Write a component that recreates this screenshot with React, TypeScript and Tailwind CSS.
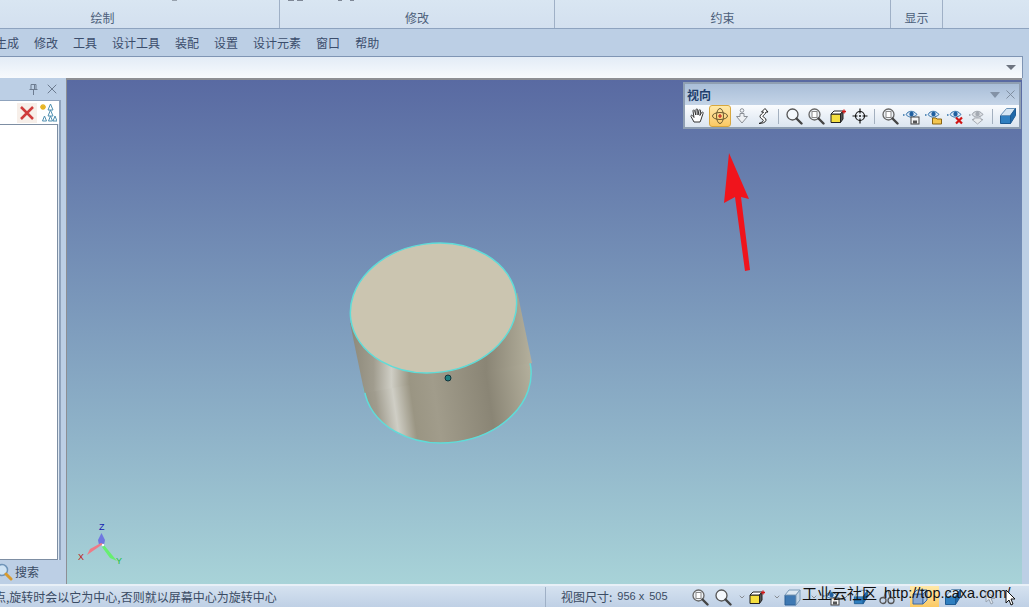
import type { ReactNode } from "react"
import { X, ChevronDown } from "lucide-react"

const CJK = "font-['Noto_Sans_CJK_SC','Liberation_Sans',sans-serif]"

const MENU_ITEMS = ["生成", "修改", "工具", "设计工具", "装配", "设置", "设计元素", "窗口", "帮助"]

const RIBBON_GROUPS = [
  { label: "绘制", width: "w-[280px]", pad: "pr-[74px]" },
  { label: "修改", width: "w-[275px]", pad: "" },
  { label: "约束", width: "w-[336px]", pad: "" },
  { label: "显示", width: "w-[52px]", pad: "" },
]

function Ico({ children, size = 18 }: { children: ReactNode; size?: number }) {
  return (
    <svg width={size} height={size} viewBox="0 0 18 18" fill="none">
      {children}
    </svg>
  )
}

const HandIcon = () => (
  <Ico>
    <path d="M5 15 2 9.500c-.6-1 .8-1.800 1.500-.9L5 10.500 4 4c-.2-1.200 1.500-1.400 1.700-.2L6.800 8 7 2.800c0-1.200 1.700-1.200 1.700 0L9 8l1-4.600c.3-1.100 1.800-.8 1.600.4L10.900 8.500l1.700-3c.6-1 2-.3 1.500.8L12.500 11c-.4 1.500-.8 2.500-1.500 4Z" fill="#fff" stroke="#333" strokeWidth="1" />
  </Ico>
)

const OrbitIcon = () => (
  <Ico>
    <ellipse cx="9" cy="9" rx="7.500" ry="3.500" stroke="#6b5a30" strokeWidth="1" />
    <ellipse cx="9" cy="9" rx="3.500" ry="7.500" stroke="#6b5a30" strokeWidth="1" />
    <path d="M7 9h4M9 7v4" stroke="#c02020" strokeWidth="1.200" />
  </Ico>
)

const DownIcon = () => (
  <Ico>
    <circle cx="9" cy="3.500" r="1.800" stroke="#8a8f96" />
    <path d="M7 6.500h4v3h3.500L9 16 3.500 9.500H7Z" fill="#eef1f4" stroke="#8a8f96" />
  </Ico>
)

const SnakeIcon = () => (
  <Ico>
    <path d="M10 1.500 13 5h-2c-.6 2.500-3 3-3 4.500 0 1 3.500 1.500 3 3.800-.4 2-3.500 3.200-7 3.200 2-1 4.300-1.700 4.300-3 0-1.500-3.300-1.800-3.300-4 0-2 3-3 3.500-4.500H6.500Z" fill="#fff" stroke="#222" strokeWidth="1" />
  </Ico>
)

const ZoomIcon = () => (
  <Ico>
    <circle cx="7.500" cy="7.500" r="5.500" fill="#f4f8fc" stroke="#555" strokeWidth="1.300" />
    <path d="m11.500 11.500 5 5" stroke="#444" strokeWidth="2.400" strokeLinecap="round" />
  </Ico>
)

const ZoomWindowIcon = () => (
  <Ico>
    <circle cx="7.500" cy="7.500" r="5.500" fill="#eef2f6" stroke="#666" strokeWidth="1.300" />
    <rect x="5" y="4.500" width="5" height="6" fill="#fff" stroke="#888" />
    <path d="m11.500 11.500 5 5" stroke="#444" strokeWidth="2.400" strokeLinecap="round" />
  </Ico>
)

const BoxIcon = () => (
  <Ico>
    <path d="M2 7h9.500v8.500H2Z" fill="#f5df3f" stroke="#222" />
    <path d="m2 7 3-3h9l-2.500 3Z" fill="#fff" stroke="#222" />
    <path d="M11.500 7 14 4v8l-2.500 3.500Z" fill="#555" stroke="#222" />
    <path d="M13 4.500h4M15 2.500v4" stroke="#d01818" strokeWidth="1.300" />
  </Ico>
)

const TargetIcon = () => (
  <Ico>
    <circle cx="9" cy="9" r="4.500" stroke="#111" strokeWidth="1.200" />
    <path d="M9 1.500v5M9 11.500v5M1.500 9h5M11.500 9h5" stroke="#111" strokeWidth="1.200" />
    <circle cx="9" cy="9" r="1" fill="#111" />
  </Ico>
)

const EyeBase = ({ faded = false }: { faded?: boolean }) => (
  <>
    <path d="M3 7.500C5 4 10 2.500 14 7.500 10 11 6 11 3 7.500Z" fill={faded ? "#d9dde2" : "#dbe8f6"} stroke={faded ? "#9aa0a8" : "#2f6fa8"} />
    <circle cx="8.500" cy="7" r="2.200" fill={faded ? "#a5abb3" : "#1f5f9f"} />
    <path d="M0 8h1.500" stroke={faded ? "#9aa0a8" : "#2f6fa8"} strokeWidth="1.500" />
  </>
)

const ViewSaveIcon = () => (
  <Ico>
    <EyeBase />
    <rect x="8" y="10" width="8" height="7" fill="#f4f4f4" stroke="#444" />
    <rect x="10" y="13.500" width="4" height="3" fill="#555" />
  </Ico>
)

const ViewOpenIcon = () => (
  <Ico>
    <EyeBase />
    <path d="M7.500 11H11l1 1h4.500v5h-9Z" fill="#f3c650" stroke="#8a6414" />
  </Ico>
)

const ViewDeleteIcon = () => (
  <Ico>
    <EyeBase />
    <path d="m9 10.500 6 6M15 10.500l-6 6" stroke="#d01414" strokeWidth="2.200" />
  </Ico>
)

const ViewFadedIcon = () => (
  <Ico>
    <EyeBase faded />
    <path d="M5 11h7v1.500h2L8.500 17 3 12.500h2Z" fill="#e8ebee" stroke="#a8adb4" />
  </Ico>
)

const SolidIcon = ({ size = 18 }: { size?: number }) => (
  <Ico size={size}>
    <path d="M1.500 8.500h10v8h-10Z" fill="#2f7fc0" stroke="#1d5b94" />
    <path d="m1.500 8.500 6-7h9l-5 7Z" fill="#d5e6f4" stroke="#6a93b8" />
    <path d="m11.500 8.500 5-7v7l-5 8Z" fill="#1f69aa" stroke="#1d5b94" />
  </Ico>
)

const ShadedCubeIcon = () => (
  <Ico>
    <path d="M1 7h11v10H1Z" fill="#3f79b3" stroke="#2b5f94" />
    <path d="m1 7 4-5h11l-4 5Z" fill="#dde8f2" stroke="#7d9cb8" />
    <path d="m12 7 4-5v10l-4 5Z" fill="#c3d5e6" stroke="#7d9cb8" />
  </Ico>
)

const PaleCubeIcon = () => (
  <Ico>
    <path d="M2 6h10v10H2Z" fill="#8aa9d4" stroke="#3f6ba3" />
    <path d="m2 6 4-4h10l-4 4Z" fill="#c5d5ea" stroke="#3f6ba3" />
    <path d="m12 6 4-4v10l-4 4Z" fill="#a9c0df" stroke="#3f6ba3" />
  </Ico>
)

const ScissorIcon = () => (
  <Ico>
    <circle cx="5" cy="12.500" r="3" stroke="#555" strokeWidth="1.300" />
    <circle cx="13" cy="12.500" r="3" stroke="#555" strokeWidth="1.300" />
    <path d="M6 9.500 8 2M12 9.500 10 2" stroke="#777" strokeWidth="1.200" />
  </Ico>
)

const FadedPointerIcon = () => (
  <Ico>
    <path d="M5 3v11l3-2.500 2 4.500 2-1-2-4.500h4Z" fill="#dfe6ee" stroke="#98a3b0" />
  </Ico>
)

const TOOL_GROUPS = [
  [HandIcon, OrbitIcon, DownIcon, SnakeIcon],
  [ZoomIcon, ZoomWindowIcon, BoxIcon, TargetIcon],
  [ZoomWindowIcon, ViewSaveIcon, ViewOpenIcon, ViewDeleteIcon, ViewFadedIcon],
  [SolidIcon],
]

function ViewToolbar() {
  return (
    <div className="absolute left-[616px] top-[2px] w-[338px] h-[47px] border-2 border-[#8f9fb2] bg-[#bccde2]">
      <div className="h-[21px] flex items-center justify-between pl-[2px] pr-[1px] bg-gradient-to-b from-[#a9bed8] to-[#c4d4e7]">
        <span className={`${CJK} text-[12px] font-bold text-[#1f3f6c]`}>视向</span>
        <div className="flex items-center gap-[3px]">
          <svg width="10" height="6" viewBox="0 0 10 6"><path d="M0 0h10L5 6Z" fill="#8392a6" /></svg>
          <X size={15} strokeWidth={1.500} className="text-[#7d8b9d]" />
        </div>
      </div>
      <div className="h-[22px] flex items-center pl-[2px] bg-gradient-to-b from-[#fafcfe] to-[#dbe5f0]">
        {TOOL_GROUPS.map((group, i) => (
          <div key={i} className="flex items-center">
            {group.map((Icon, j) => (
              <div
                key={j}
                className={`w-[22px] h-[22px] flex items-center justify-center ${
                  i === 0 && j === 1 ? "rounded-[3px] border border-[#d8a73e] bg-gradient-to-b from-[#ffe9a8] to-[#fbc963]" : ""
                }`}
              >
                <Icon />
              </div>
            ))}
            {i < TOOL_GROUPS.length - 1 && <div className="w-px h-[15px] bg-[#a3b0bf] ml-[3px] mr-[4px]" />}
          </div>
        ))}
      </div>
    </div>
  )
}

// drawing coordinates are those of the screenshot
function Cylinder() {
  return (
    <svg className="absolute left-[279px] top-[160px]" width="190" height="210" viewBox="346 240 190 210">
      <defs>
        <linearGradient id="side" gradientUnits="userSpaceOnUse" x1="352" y1="0" x2="531" y2="0">
          <stop offset="0" stopColor="#8e8a7b" />
          <stop offset="0.12" stopColor="#a09c8e" />
          <stop offset="0.22" stopColor="#cfcec5" />
          <stop offset="0.32" stopColor="#9a9583" />
          <stop offset="0.45" stopColor="#a19c8b" />
          <stop offset="0.75" stopColor="#8a8575" />
          <stop offset="1" stopColor="#b3af9c" />
        </linearGradient>
      </defs>
      <ellipse cx="447.500" cy="378" rx="84" ry="64.500" transform="rotate(-8 447.500 378)" fill="url(#side)" stroke="#5fdcd8" strokeWidth="1.500" />
      <path d="M350 323 L364.500 393 L532 363 L517.500 293 Z" fill="url(#side)" />
      <ellipse cx="433.500" cy="308" rx="83.500" ry="64.500" transform="rotate(-8 433.500 308)" fill="#cbc5b0" stroke="#5fdcd8" strokeWidth="1.500" />
      <circle cx="448" cy="378" r="3" fill="#1f7f80" stroke="#12333a" />
    </svg>
  )
}

function Triad() {
  return (
    <svg className="absolute left-[10px] top-[441px]" width="52" height="52" viewBox="0 0 52 52">
      <path d="M24.500 12 28 19l-1 5h-5l-1-5Z" fill="#6f77e0" />
      <path d="M26 23 10 34l3-6 11-6Z" fill="#ef7a86" />
      <path d="M27 24 40 40l-7-3-8-11Z" fill="#66ef70" />
      <circle cx="26" cy="24" r="1.200" fill="#fff" />
      <text x="22" y="9" fontSize="9" fill="#1420b0" fontFamily="Liberation Sans">Z</text>
      <text x="1" y="39" fontSize="9" fill="#c01818" fontFamily="Liberation Sans">X</text>
      <text x="39" y="43" fontSize="9" fill="#22c040" fontFamily="Liberation Sans">Y</text>
    </svg>
  )
}

function TreeIcon() {
  return (
    <svg width="18" height="20" viewBox="0 0 18 20" fill="none">
      <path d="M4 1v6M1 4h6M2 2l4 4M6 2 2 6" stroke="#e6b422" strokeWidth="1.300" />
      <path d="M11.500 1 9 7h5ZM11.500 7 9 13h5Z" stroke="#4f8fb0" strokeWidth="1" />
      <path d="M5.500 13 3.500 18h4ZM11.500 13l-2 5h4ZM16 13l-2 5h4Z" stroke="#4f8fb0" strokeWidth="1" />
    </svg>
  )
}

function SidePanel() {
  return (
    <div className="w-[66px] shrink-0 flex flex-col bg-[#bccfe5]">
      <div className="h-[22px] flex items-center justify-end gap-[6px] pr-[9px] text-[#6d7c90]">
        <svg width="9" height="11" viewBox="0 0 9 11" fill="none">
          <path d="M2 .5h5v5H2ZM.5 5.500h8M4.500 6v5M5.500 1v4" stroke="#6d7c90" />
        </svg>
        <X size={16} strokeWidth={1.500} className="-mr-[3px]" />
      </div>
      <div className="flex-1 w-[61px] border-t border-r-2 border-[#8fa3bd] flex flex-col bg-[#dfe9f4]">
        <div className="h-[23px] bg-white flex items-center justify-end pr-[2px]">
          <div className="w-[20px] h-[20px] mr-[2px] flex items-center justify-center bg-[#f7efe9]">
            <svg width="16" height="16" viewBox="0 0 16 16"><path d="m2 2 12 12M14 2 2 14" stroke="#cf3b3b" strokeWidth="2.500" /></svg>
          </div>
          <TreeIcon />
        </div>
        <div className="flex-1 w-[58px] bg-white border-t border-r border-b border-[#7d8ea3]" />
      </div>
      <div className="h-[24px] flex items-center pl-[15px] relative">
        <svg className="absolute -left-[5px] top-[3px]" width="18" height="18" viewBox="0 0 18 18" fill="none">
          <circle cx="7" cy="7" r="5.500" fill="#cfe3f4" stroke="#6f94b8" strokeWidth="1.500" />
          <path d="m11 11 5 5" stroke="#d79a2f" strokeWidth="3" strokeLinecap="round" />
        </svg>
        <span className={`${CJK} text-[12px] text-[#3a4b63]`}>搜索</span>
      </div>
    </div>
  )
}

export default function App() {
  return (
    <div className={`${CJK} relative w-[1029px] h-[607px] overflow-hidden flex flex-col bg-[#bccfe5]`}>
      {/* ribbon, only the group captions are in view */}
      <div className="relative h-[29px] shrink-0 flex border-b border-[#8ea3bf] bg-gradient-to-b from-[#d9e6f2] to-[#d3e0ef]">
        {RIBBON_GROUPS.map((g) => (
          <div key={g.label} className={`${g.width} ${g.pad} h-full pt-[9px] flex justify-center border-r border-[#9fb0c6] text-[12px] leading-[18px] text-[#4c5f7a]`}>
            {g.label}
          </div>
        ))}
        {/* bottoms of the ribbon icons that are cut off by the top edge */}
        <div className="absolute left-[172px] top-0 w-[5px] h-px bg-[#98a2ae]" />
        <div className="absolute left-[288px] top-0 w-[6px] h-px bg-[#7f8896]" />
        <div className="absolute left-[297px] top-0 w-[6px] h-px bg-[#7f8896]" />
        <div className="absolute left-[338px] top-0 w-[4px] h-px bg-[#7f8896]" />
        <div className="absolute left-[350px] top-0 w-[4px] h-px bg-[#7f8896]" />
      </div>

      <div className="h-[27px] shrink-0 flex items-center gap-[15px] -ml-[5px] text-[12px] text-[#3b4d6c] bg-[#bccfe5]">
        {MENU_ITEMS.map((m) => (
          <span key={m}>{m}</span>
        ))}
      </div>

      <div className="h-[22px] shrink-0 mr-[6px] border-t border-r border-[#7f95b4] bg-gradient-to-b from-[#e3ecf6] to-[#f7fafd] flex items-center justify-end pr-[6px]">
        <svg width="10" height="5" viewBox="0 0 10 5"><path d="M0 0h10L5 5Z" fill="#6d7480" /></svg>
      </div>

      <div className="flex-1 min-h-0 flex">
        <SidePanel />
        <div className="relative w-[956px] shrink-0 border-t-2 border-l border-[#8d8f94] bg-gradient-to-b from-[#596aa2] to-[#a8d3d8]">
          <ViewToolbar />
          <svg className="absolute left-[650px] top-[70px]" width="40" height="125" viewBox="0 0 40 125">
            <path d="M12 3 32 49l-8-2 9 73-5 1-10-74-11 6Z" fill="#f0141c" />
          </svg>
          <Cylinder />
          <Triad />
        </div>
      </div>

      <div className="relative h-[23px] shrink-0 flex items-center border-t-2 border-[#e8f0f7] bg-gradient-to-b from-[#d5e2f0] to-[#bfd0e5] text-[12px] text-[#3a4b63]">
        <div className="w-[551px] -ml-[6px] shrink-0 whitespace-nowrap">点,旋转时会以它为中心,否则就以屏幕中心为旋转中心</div>
        <div className="w-px h-[20px] bg-[#9fb0c6]" />
        <div className="ml-[15px] w-[130px] shrink-0 flex items-center">
          <span>视图尺寸:</span>
          <span className="ml-[5px] text-[11px] font-['Liberation_Sans',sans-serif]">956</span>
          <span className="ml-[3px] text-[11px] font-['Liberation_Sans',sans-serif]">x</span>
          <span className="ml-[5px] text-[11px] font-['Liberation_Sans',sans-serif]">505</span>
        </div>
        <div className="flex items-center">
          <ZoomWindowIcon />
          <div className="ml-[5px]"><ZoomIcon /></div>
          <ChevronDown size={8} className="ml-[6px] text-[#666]" />
          <div className="ml-[2px]"><BoxIcon /></div>
          <ChevronDown size={8} className="ml-[7px] text-[#666]" />
          <div className="ml-[3px]"><ShadedCubeIcon /></div>
          <ChevronDown size={8} className="ml-[8px] text-[#666]" />
          <div className="ml-[5px]"><ViewSaveIcon /></div>
          <ChevronDown size={8} className="text-[#666]" />
          <div className="ml-[4px]"><SolidIcon size={16} /></div>
          <div className="ml-[9px]"><ScissorIcon /></div>
          <div className="ml-[14px] w-[29px] h-[21px] pl-[1px] flex items-center bg-gradient-to-b from-[#ffe9a8] to-[#fbc963]"><PaleCubeIcon /></div>
          <div className="ml-[5px]"><SolidIcon /></div>
          <div className="ml-[19px]"><FadedPointerIcon /></div>
        </div>
        {/* watermark stamped over the picture */}
        <div className="absolute left-[802px] top-[-3px] flex items-center gap-[7px] text-[#111] leading-[20px]">
          <span className="text-[15px]">工业云社区</span>
          <span className="text-[14.5px] font-['Liberation_Sans',sans-serif]">http://top.caxa.com/</span>
        </div>
        <svg className="absolute left-[1005px] top-[3px]" width="12" height="18" viewBox="0 0 12 18">
          <path d="M1 1v13l3-3 2 5 2-1-2-5h4Z" fill="#fff" stroke="#111" />
        </svg>
      </div>
    </div>
  )
}
